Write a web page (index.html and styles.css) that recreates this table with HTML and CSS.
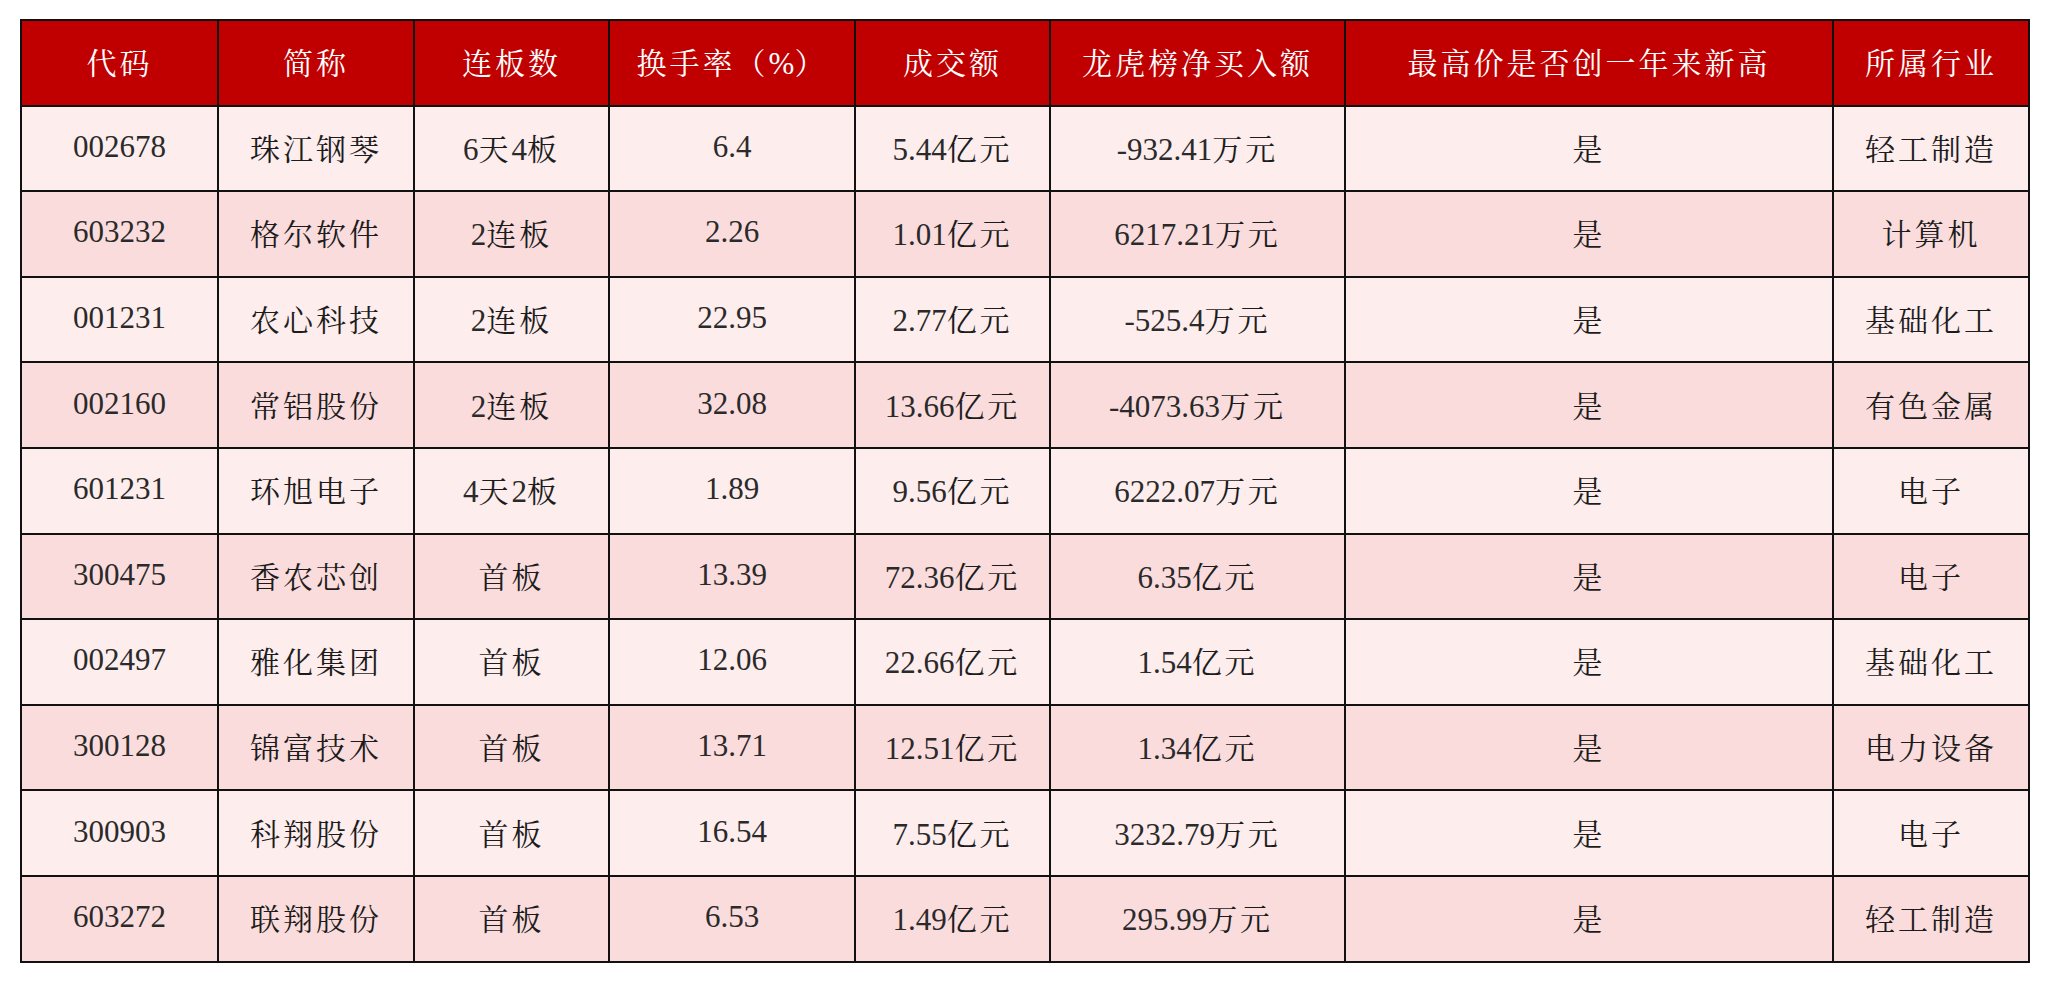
FILE: index.html
```html
<!DOCTYPE html>
<html lang="zh-CN">
<head>
<meta charset="utf-8">
<title>连板股统计</title>
<link rel="stylesheet" href="styles.css">
</head>
<body>
<table class="board">
  <colgroup>
    <col class="c1"><col class="c2"><col class="c3"><col class="c4">
    <col class="c5"><col class="c6"><col class="c7"><col class="c8">
  </colgroup>
  <thead>
    <tr>
      <th>代码</th><th>简称</th><th>连板数</th><th>换手率（<span class="n">%</span>）</th>
      <th>成交额</th><th>龙虎榜净买入额</th><th>最高价是否创一年来新高</th><th>所属行业</th>
    </tr>
  </thead>
  <tbody>
    <tr><td class="n">002678</td><td>珠江钢琴</td><td><span class="n">6</span>天<span class="n">4</span>板</td><td class="n">6.4</td><td><span class="n">5.44</span>亿元</td><td><span class="n">-932.41</span>万元</td><td>是</td><td>轻工制造</td></tr>
    <tr><td class="n">603232</td><td>格尔软件</td><td><span class="n">2</span>连板</td><td class="n">2.26</td><td><span class="n">1.01</span>亿元</td><td><span class="n">6217.21</span>万元</td><td>是</td><td>计算机</td></tr>
    <tr><td class="n">001231</td><td>农心科技</td><td><span class="n">2</span>连板</td><td class="n">22.95</td><td><span class="n">2.77</span>亿元</td><td><span class="n">-525.4</span>万元</td><td>是</td><td>基础化工</td></tr>
    <tr><td class="n">002160</td><td>常铝股份</td><td><span class="n">2</span>连板</td><td class="n">32.08</td><td><span class="n">13.66</span>亿元</td><td><span class="n">-4073.63</span>万元</td><td>是</td><td>有色金属</td></tr>
    <tr><td class="n">601231</td><td>环旭电子</td><td><span class="n">4</span>天<span class="n">2</span>板</td><td class="n">1.89</td><td><span class="n">9.56</span>亿元</td><td><span class="n">6222.07</span>万元</td><td>是</td><td>电子</td></tr>
    <tr><td class="n">300475</td><td>香农芯创</td><td>首板</td><td class="n">13.39</td><td><span class="n">72.36</span>亿元</td><td><span class="n">6.35</span>亿元</td><td>是</td><td>电子</td></tr>
    <tr><td class="n">002497</td><td>雅化集团</td><td>首板</td><td class="n">12.06</td><td><span class="n">22.66</span>亿元</td><td><span class="n">1.54</span>亿元</td><td>是</td><td>基础化工</td></tr>
    <tr><td class="n">300128</td><td>锦富技术</td><td>首板</td><td class="n">13.71</td><td><span class="n">12.51</span>亿元</td><td><span class="n">1.34</span>亿元</td><td>是</td><td>电力设备</td></tr>
    <tr><td class="n">300903</td><td>科翔股份</td><td>首板</td><td class="n">16.54</td><td><span class="n">7.55</span>亿元</td><td><span class="n">3232.79</span>万元</td><td>是</td><td>电子</td></tr>
    <tr><td class="n">603272</td><td>联翔股份</td><td>首板</td><td class="n">6.53</td><td><span class="n">1.49</span>亿元</td><td><span class="n">295.99</span>万元</td><td>是</td><td>轻工制造</td></tr>
  </tbody>
</table>
</body>
</html>
```
FILE: styles.css
```css
html, body {
  margin: 0;
  padding: 0;
  background: #ffffff;
}
body {
  padding: 19px 20px 0 20px;
  font-family: "Liberation Serif", "Noto Serif CJK SC", "Noto Sans CJK SC", serif;
}
.board {
  width: 2008px;
  table-layout: fixed;
  border-collapse: collapse;
  border: 2px solid #111;
}
.c1 { width: 197px; }
.c2 { width: 196px; }
.c3 { width: 195px; }
.c4 { width: 246px; }
.c5 { width: 195px; }
.c6 { width: 295px; }
.c7 { width: 488px; }
.c8 { width: 196px; }

.board th,
.board td {
  border: 2px solid #111;
  text-align: center;
  vertical-align: middle;
  padding: 0 0 3px 0;
  font-size: 30px;
  font-weight: normal;
  letter-spacing: 3px;
  height: 85.6px;
  box-sizing: border-box;
}
.board .n {
  letter-spacing: 0;
  font-size: 31px;
  color: #2a2a2a;
}
.board th .n {
  color: #ffffff;
}
.board th {
  background: #c00000;
  color: #ffffff;
}
.board td {
  color: #1c1c1c;
}
.board tbody tr:nth-child(odd) td {
  background: #fdeded;
}
.board tbody tr:nth-child(even) td {
  background: #fbdcdd;
}
```
